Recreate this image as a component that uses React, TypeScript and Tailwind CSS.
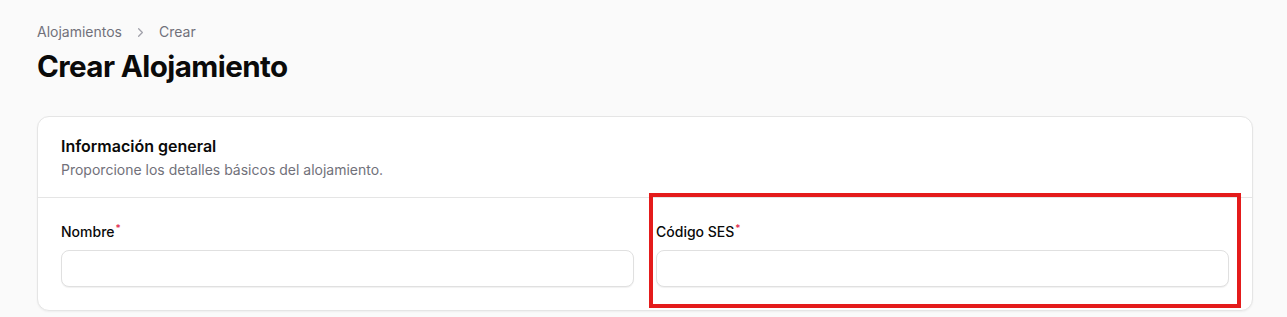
import { ChevronRight } from "lucide-react";

function Field({ label }: { label: string }) {
  return (
    <div className="flex flex-col">
      <label className="text-[14px] font-medium text-[#0a0a0a] leading-5">
        {label}
        <sup className="text-[#e11d48] ml-[1px] text-[10px]">*</sup>
      </label>
      <input
        className="mt-[8px] h-[37px] w-full rounded-lg border border-[#e0e0e0] bg-white px-3 text-sm shadow-[0_1px_1px_rgba(0,0,0,0.06)] outline-none"
        type="text"
      />
    </div>
  );
}

export default function App() {
  return (
    <div
      className="min-h-[317px] bg-[#fafafa] pl-[37px] pr-[34px] pt-[22px] text-[#0a0a0a]"
      style={{ fontFamily: "Inter, 'Noto Sans', sans-serif" }}
    >
      {/* Breadcrumb */}
      <nav className="flex items-center gap-[11px] text-[14px] text-[#71717a] leading-5">
        <span>Alojamientos</span>
        <ChevronRight size={15} strokeWidth={2} className="text-[#a1a1aa]" />
        <span>Crear</span>
      </nav>

      <h1 className="mt-[6px] text-[29.6px] font-bold leading-9 tracking-[-0.02em]">Crear Alojamiento</h1>

      {/* Card */}
      <div className="relative mt-[32px] rounded-xl border border-[#e5e5e5] bg-white shadow-[0_1px_2px_rgba(0,0,0,0.05)]">
        <div className="px-[23px] pt-[17px] pb-[17px] border-b border-[#e5e5e5]">
          <h2 className="text-[16px] font-semibold leading-6">Información general</h2>
          <p className="mt-[2px] text-[14px] text-[#71717a] leading-5">
            Proporcione los detalles básicos del alojamiento.
          </p>
        </div>
        <div className="grid grid-cols-2 gap-[22px] px-[23px] pt-[24px] pb-[23px]">
          <Field label="Nombre" />
          <Field label="Código SES" />
        </div>

        {/* annotation highlight */}
        <div className="pointer-events-none absolute left-[611px] top-[76px] h-[115px] w-[592px] border-[4px] border-[#e41b1b]" />
      </div>
    </div>
  );
}
